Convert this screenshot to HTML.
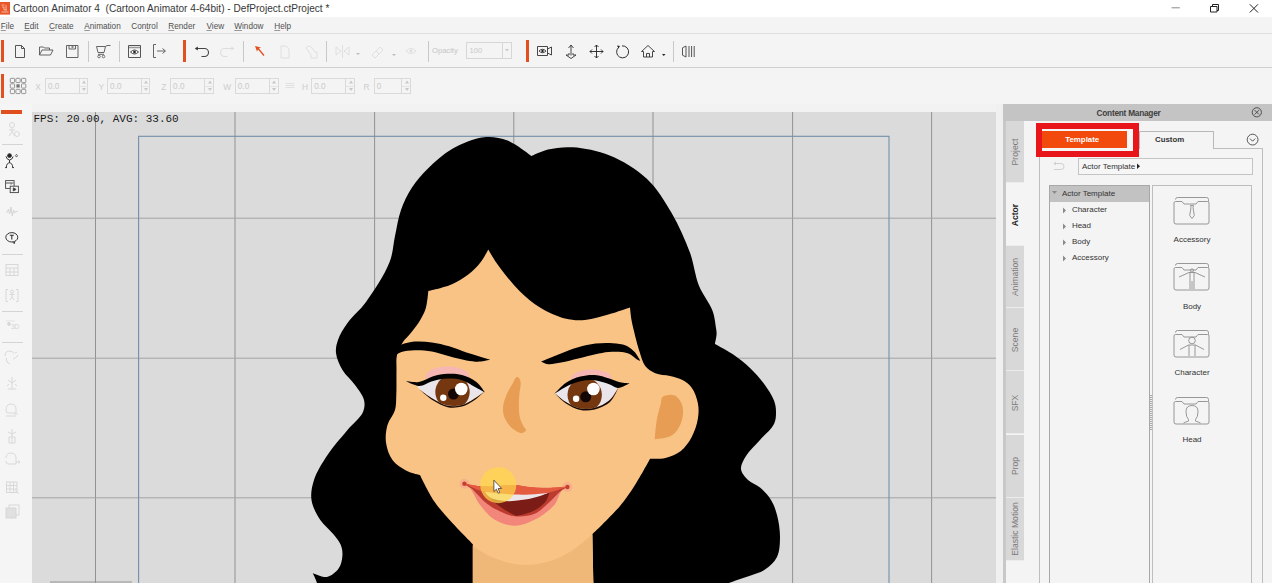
<!DOCTYPE html>
<html><head><meta charset="utf-8"><style>
html,body{margin:0;padding:0;}
body{width:1272px;height:583px;overflow:hidden;position:relative;background:#f4f4f4;font-family:'Liberation Sans', sans-serif;}
u{text-decoration-thickness:1px;text-underline-offset:1px}
</style></head><body>
<div style="position:absolute;left:0px;top:0px;width:1272px;height:17px;background:#fff"></div><svg style="position:absolute;left:0;top:2px" width="10" height="13" viewBox="0 0 10 13"><rect width="10" height="12.6" fill="#e8562a"/><path d="M1.5,3 h3 M2,5 h2 v3 h3 M6,3 v5 M1.5,10 h7" stroke="#f8c0a8" stroke-width="0.9" fill="none"/></svg><div style="position:absolute;left:13px;top:2.5px;font:normal 10.1px/12px 'Liberation Sans', sans-serif;color:#383838;white-space:pre;">Cartoon Animator 4  (Cartoon Animator 4-64bit) - DefProject.ctProject *</div><svg style="position:absolute;left:1160px;top:0" width="112" height="17" viewBox="1160 0 112 17"><path d="M1171.6,7.8 H1179.8" stroke="#8a8a8a" stroke-width="1"/><path d="M1210.5,6.5 h6.5 v5.5 h-6.5 z M1212.5,6.5 v-2 h6 v6 h-1.5" stroke="#222" stroke-width="1" fill="none"/><path d="M1249.8,4.3 L1258,12.5 M1258,4.3 L1249.8,12.5" stroke="#222" stroke-width="1"/></svg><div style="position:absolute;left:0px;top:17px;width:1272px;height:17px;background:#f4f4f4"></div><div style="position:absolute;left:0px;top:33px;width:1272px;height:1px;background:#dedede"></div><div style="position:absolute;left:0.8px;top:21.8px;font:normal 8.2px/10px 'Liberation Sans', sans-serif;color:#505050;white-space:pre;"><u style="text-decoration-color:#999">F</u>ile</div><div style="position:absolute;left:24.3px;top:21.8px;font:normal 8.2px/10px 'Liberation Sans', sans-serif;color:#505050;white-space:pre;"><u style="text-decoration-color:#999">E</u>dit</div><div style="position:absolute;left:49px;top:21.8px;font:normal 8.2px/10px 'Liberation Sans', sans-serif;color:#505050;white-space:pre;"><u style="text-decoration-color:#999">C</u>reate</div><div style="position:absolute;left:84.3px;top:21.8px;font:normal 8.2px/10px 'Liberation Sans', sans-serif;color:#505050;white-space:pre;"><u style="text-decoration-color:#999">A</u>nimation</div><div style="position:absolute;left:131.3px;top:21.8px;font:normal 8.2px/10px 'Liberation Sans', sans-serif;color:#505050;white-space:pre;">Con<u style="text-decoration-color:#999">t</u>rol</div><div style="position:absolute;left:168.3px;top:21.8px;font:normal 8.2px/10px 'Liberation Sans', sans-serif;color:#505050;white-space:pre;"><u style="text-decoration-color:#999">R</u>ender</div><div style="position:absolute;left:206.5px;top:21.8px;font:normal 8.2px/10px 'Liberation Sans', sans-serif;color:#505050;white-space:pre;"><u style="text-decoration-color:#999">V</u>iew</div><div style="position:absolute;left:234.3px;top:21.8px;font:normal 8.2px/10px 'Liberation Sans', sans-serif;color:#505050;white-space:pre;"><u style="text-decoration-color:#999">W</u>indow</div><div style="position:absolute;left:274.3px;top:21.8px;font:normal 8.2px/10px 'Liberation Sans', sans-serif;color:#505050;white-space:pre;"><u style="text-decoration-color:#999">H</u>elp</div><div style="position:absolute;left:0px;top:34px;width:1272px;height:33px;background:#f4f4f4"></div><div style="position:absolute;left:0px;top:67px;width:1272px;height:1px;background:#d0d0d0"></div><div style="position:absolute;left:1px;top:40px;width:3px;height:22px;background:#e2501f"></div><div style="position:absolute;left:183px;top:40px;width:3.3px;height:22px;background:#e2501f"></div><div style="position:absolute;left:525.8px;top:40px;width:3px;height:22px;background:#e2501f"></div><div style="position:absolute;left:87.5px;top:40.5px;width:1px;height:21px;background:#c8c8c8"></div><div style="position:absolute;left:118.5px;top:40.5px;width:1px;height:21px;background:#c8c8c8"></div><div style="position:absolute;left:243.4px;top:40.5px;width:1px;height:21px;background:#c8c8c8"></div><div style="position:absolute;left:326.4px;top:40.5px;width:1px;height:21px;background:#c8c8c8"></div><div style="position:absolute;left:427.5px;top:40.5px;width:1px;height:21px;background:#c8c8c8"></div><div style="position:absolute;left:672.5px;top:40.5px;width:1px;height:21px;background:#c8c8c8"></div><svg style="position:absolute;left:0;top:34px" width="720" height="33" viewBox="0 34 720 33" fill="none" stroke-linejoin="round"><path d="M15.5,45.5 h6 l3,3 v9 h-9 z M21.5,45.5 v3 h3" stroke="#444" stroke-width="0.9"/><path d="M39.5,55 v-8 h4 l1,1 h5 v2 M39.5,55 l2.5,-5 h11 l-2.5,5 z" stroke="#555" stroke-width="0.9"/><path d="M66.5,45.5 h11.5 v12 h-11.5 z M69,45.5 v3.5 h6.5 v-3.5" stroke="#555" stroke-width="0.9"/><rect x="71.5" y="46" width="2" height="2" fill="#888"/><path d="M96.5,46.5 h9 l-1.5,6 h-6 z M105.5,46.5 l1.5,-1 h3.5 M98,54.3 h6" stroke="#555" stroke-width="0.9"/><circle cx="99" cy="56.5" r="1.3" stroke="#555" stroke-width="0.8"/><circle cx="103.5" cy="56.5" r="1.3" stroke="#555" stroke-width="0.8"/><path d="M128.5,45.5 h12 v12 h-12 z" stroke="#555" stroke-width="1"/><path d="M129,47.5 h11" stroke="#999" stroke-width="1.5"/><path d="M130.5,52 q4,-4 8,0 q-4,4 -8,0z" stroke="#333" stroke-width="0.9"/><circle cx="134.5" cy="52" r="1.3" fill="#222"/><path d="M156,44.5 h-2.5 v13 h2.5 M157,51 h8 M162.5,48.5 l3,2.5 l-3,2.5" stroke="#555" stroke-width="0.9"/><path d="M196.5,48.5 h8 a4,4 0 0 1 0,8 h-3" stroke="#444" stroke-width="1.1"/><path d="M194.8,48.5 l3,-2 v4 z" fill="#333"/><path d="M232.5,48.5 h-8 a4,4 0 0 0 0,8 h3" stroke="#ddd" stroke-width="1.1"/><path d="M234.3,48.5 l-3,-2 v4 z" fill="#ddd"/><path d="M255,46 l6,1.5 l-2,1 l5.5,6.5 l-1,1 l-5.5,-6.5 l-1,2 z" fill="#e2501f"/><path d="M281,46 h5 l3,3 v9 h-8 z" stroke="#ddd" stroke-width="0.9"/><path d="M306,48 q3,-4 6,0 l3,4 h2 v6 h-6 v-3 z" stroke="#ddd" stroke-width="0.9"/><path d="M336,47 l5,4 l-5,4 z M349,47 l-5,4 l5,4 z M342.5,45 v13" stroke="#ddd" stroke-width="0.9"/><path d="M356,53 h4 l-2,2 z" fill="#bbb"/><path d="M372,55 l8,-8 l3,3 l-8,8 z M376,51 l3,3" stroke="#ddd" stroke-width="0.9"/><path d="M392,54 h4 l-2,2 z" fill="#bbb"/><path d="M406,51 q5,-5 10,0 q-5,5 -10,0z" stroke="#ddd" stroke-width="0.9"/><circle cx="411" cy="51" r="1.5" fill="#ddd"/></svg><div style="position:absolute;left:432px;top:46px;font:normal 7.6px/10px 'Liberation Sans', sans-serif;color:#c4c4c4;white-space:pre;">Opacity</div><div style="position:absolute;left:466px;top:42px;width:45.5px;height:17px;border:1px solid #d6d6d6;box-sizing:border-box;background:#f4f4f4"></div><div style="position:absolute;left:502px;top:42px;width:1px;height:17px;background:#d6d6d6"></div><div style="position:absolute;left:469.5px;top:46px;font:normal 7.6px/10px 'Liberation Sans', sans-serif;color:#c8c8c8;white-space:pre;">100</div><svg style="position:absolute;left:504px;top:48px" width="6" height="5"><path d="M1,1 h4 l-2,2.5z" fill="#c8c8c8"/></svg><svg style="position:absolute;left:530px;top:34px" width="180" height="33" viewBox="530 34 180 33" fill="none"><path d="M537.5,46.5 h10 v9 h-10 z M547.5,49 l4,-2 v8 l-4,-2" stroke="#333" stroke-width="0.9"/><path d="M539,51 q3.5,-3.5 7,0 q-3.5,3.5 -7,0z" stroke="#222" stroke-width="0.8"/><circle cx="542.5" cy="51" r="1.2" fill="#222"/><path d="M571,45.5 v10 M568.5,48 l2.5,-3 l2.5,3 M566,55 l5,3.5 l5,-3.5 h-3 v-2 M566,55 h3 v-2" stroke="#333" stroke-width="0.9"/><path d="M596.5,45 v13 M590,51.5 h13 M594.5,47 l2,-2 l2,2 M594.5,56 l2,2 l2,-2 M592,49.5 l-2,2 l2,2 M601,49.5 l2,2 l-2,2" stroke="#222" stroke-width="0.9"/><path d="M618.5,47.5 a6,6 0 1 0 3.5,-1.6" stroke="#333" stroke-width="1"/><path d="M617,45.5 l3,0.5 l-1.5,2.5z" fill="#222"/><path d="M641.5,51.5 l6.5,-6 l6.5,6 h-2 v5.5 h-9 v-5.5 z M646.5,57 v-3.5 h3 v3.5" stroke="#333" stroke-width="0.9"/><path d="M662,54 h3.5 l-1.75,2z" fill="#222"/><path d="M686,46 v11 l-3.5,-1.8 v-7.4 z M689,46 v11 M691.6,46 v11 M694.2,46 v11" stroke="#444" stroke-width="0.9"/></svg><div style="position:absolute;left:0px;top:68px;width:1272px;height:35px;background:#f4f4f4"></div><div style="position:absolute;left:0px;top:103.6px;width:1272px;height:1.2px;background:#e0e0e0"></div><div style="position:absolute;left:1px;top:73.7px;width:3px;height:24.2px;background:#e2501f"></div><svg style="position:absolute;left:9px;top:77px" width="20" height="19" viewBox="9 77 20 19"><rect x="10.3" y="78.3" width="4.3" height="4.3" rx="0.8" fill="none" stroke="#8a8a8a" stroke-width="0.9"/><rect x="15.9" y="78.3" width="4.3" height="4.3" rx="0.8" fill="none" stroke="#8a8a8a" stroke-width="0.9"/><rect x="21.5" y="78.3" width="4.3" height="4.3" rx="0.8" fill="none" stroke="#8a8a8a" stroke-width="0.9"/><rect x="10.3" y="83.8" width="4.3" height="4.3" rx="0.8" fill="none" stroke="#8a8a8a" stroke-width="0.9"/><rect x="16.4" y="84.3" width="3.3" height="3.3" fill="#777"/><rect x="21.5" y="83.8" width="4.3" height="4.3" rx="0.8" fill="none" stroke="#8a8a8a" stroke-width="0.9"/><rect x="10.3" y="89.3" width="4.3" height="4.3" rx="0.8" fill="none" stroke="#8a8a8a" stroke-width="0.9"/><rect x="15.9" y="89.3" width="4.3" height="4.3" rx="0.8" fill="none" stroke="#8a8a8a" stroke-width="0.9"/><rect x="21.5" y="89.3" width="4.3" height="4.3" rx="0.8" fill="none" stroke="#8a8a8a" stroke-width="0.9"/></svg><div style="position:absolute;left:35.2px;top:81.5px;font:normal 8.4px/10px 'Liberation Sans', sans-serif;color:#cdcdcd;white-space:pre;">X</div><div style="position:absolute;left:45.1px;top:77.7px;width:43px;height:16px;border:1px solid #dadada;box-sizing:border-box"></div><div style="position:absolute;left:78.5px;top:77.7px;width:1px;height:16px;background:#dadada"></div><div style="position:absolute;left:79.5px;top:85.6px;width:8px;height:0.8px;background:#e4e4e4"></div><div style="position:absolute;left:47.9px;top:81.5px;font:normal 8.2px/10px 'Liberation Sans', sans-serif;color:#cacaca;white-space:pre;">0.0</div><svg style="position:absolute;left:79.89999999999999px;top:79px" width="8" height="14"><path d="M2,4.5 l2,-3 l2,3z M2,9 l2,3 l2,-3z" fill="#c8c8c8"/></svg><div style="position:absolute;left:98.5px;top:81.5px;font:normal 8.4px/10px 'Liberation Sans', sans-serif;color:#cdcdcd;white-space:pre;">Y</div><div style="position:absolute;left:107.3px;top:77.7px;width:43px;height:16px;border:1px solid #dadada;box-sizing:border-box"></div><div style="position:absolute;left:140.70000000000002px;top:77.7px;width:1px;height:16px;background:#dadada"></div><div style="position:absolute;left:141.70000000000002px;top:85.6px;width:8px;height:0.8px;background:#e4e4e4"></div><div style="position:absolute;left:110.1px;top:81.5px;font:normal 8.2px/10px 'Liberation Sans', sans-serif;color:#cacaca;white-space:pre;">0.0</div><svg style="position:absolute;left:142.10000000000002px;top:79px" width="8" height="14"><path d="M2,4.5 l2,-3 l2,3z M2,9 l2,3 l2,-3z" fill="#c8c8c8"/></svg><div style="position:absolute;left:161.2px;top:81.5px;font:normal 8.4px/10px 'Liberation Sans', sans-serif;color:#cdcdcd;white-space:pre;">Z</div><div style="position:absolute;left:170.3px;top:77.7px;width:43.5px;height:16px;border:1px solid #dadada;box-sizing:border-box"></div><div style="position:absolute;left:204.20000000000002px;top:77.7px;width:1px;height:16px;background:#dadada"></div><div style="position:absolute;left:205.20000000000002px;top:85.6px;width:8px;height:0.8px;background:#e4e4e4"></div><div style="position:absolute;left:173.10000000000002px;top:81.5px;font:normal 8.2px/10px 'Liberation Sans', sans-serif;color:#cacaca;white-space:pre;">0.0</div><svg style="position:absolute;left:205.60000000000002px;top:79px" width="8" height="14"><path d="M2,4.5 l2,-3 l2,3z M2,9 l2,3 l2,-3z" fill="#c8c8c8"/></svg><div style="position:absolute;left:223.3px;top:81.5px;font:normal 8.4px/10px 'Liberation Sans', sans-serif;color:#cdcdcd;white-space:pre;">W</div><div style="position:absolute;left:235px;top:77.7px;width:43.5px;height:16px;border:1px solid #dadada;box-sizing:border-box"></div><div style="position:absolute;left:268.9px;top:77.7px;width:1px;height:16px;background:#dadada"></div><div style="position:absolute;left:269.9px;top:85.6px;width:8px;height:0.8px;background:#e4e4e4"></div><div style="position:absolute;left:237.8px;top:81.5px;font:normal 8.2px/10px 'Liberation Sans', sans-serif;color:#cacaca;white-space:pre;">0.0</div><svg style="position:absolute;left:270.3px;top:79px" width="8" height="14"><path d="M2,4.5 l2,-3 l2,3z M2,9 l2,3 l2,-3z" fill="#c8c8c8"/></svg><div style="position:absolute;left:302px;top:81.5px;font:normal 8.4px/10px 'Liberation Sans', sans-serif;color:#cdcdcd;white-space:pre;">H</div><div style="position:absolute;left:311.4px;top:77.7px;width:43.5px;height:16px;border:1px solid #dadada;box-sizing:border-box"></div><div style="position:absolute;left:345.29999999999995px;top:77.7px;width:1px;height:16px;background:#dadada"></div><div style="position:absolute;left:346.29999999999995px;top:85.6px;width:8px;height:0.8px;background:#e4e4e4"></div><div style="position:absolute;left:314.2px;top:81.5px;font:normal 8.2px/10px 'Liberation Sans', sans-serif;color:#cacaca;white-space:pre;">0.0</div><svg style="position:absolute;left:346.7px;top:79px" width="8" height="14"><path d="M2,4.5 l2,-3 l2,3z M2,9 l2,3 l2,-3z" fill="#c8c8c8"/></svg><div style="position:absolute;left:363.5px;top:81.5px;font:normal 8.4px/10px 'Liberation Sans', sans-serif;color:#cdcdcd;white-space:pre;">R</div><div style="position:absolute;left:374px;top:77.7px;width:37px;height:16px;border:1px solid #dadada;box-sizing:border-box"></div><div style="position:absolute;left:401.4px;top:77.7px;width:1px;height:16px;background:#dadada"></div><div style="position:absolute;left:402.4px;top:85.6px;width:8px;height:0.8px;background:#e4e4e4"></div><div style="position:absolute;left:376.8px;top:81.5px;font:normal 8.2px/10px 'Liberation Sans', sans-serif;color:#cacaca;white-space:pre;">0</div><svg style="position:absolute;left:402.8px;top:79px" width="8" height="14"><path d="M2,4.5 l2,-3 l2,3z M2,9 l2,3 l2,-3z" fill="#c8c8c8"/></svg><svg style="position:absolute;left:284px;top:81px" width="12" height="9"><path d="M1.5,2.5 h9 M1.5,4.5 h9 M1.5,6.5 h9" stroke="#dcdcdc" stroke-width="0.8"/></svg><div style="position:absolute;left:0px;top:104px;width:32px;height:479px;background:#f5f5f5"></div><div style="position:absolute;left:1px;top:110.2px;width:21px;height:3.6px;background:#e04e1e"></div><div style="position:absolute;left:2px;top:144px;width:20.5px;height:1px;background:#d4d4d4"></div><div style="position:absolute;left:2px;top:253.6px;width:20.5px;height:1px;background:#d4d4d4"></div><div style="position:absolute;left:2px;top:311px;width:20.5px;height:1px;background:#d4d4d4"></div><div style="position:absolute;left:2px;top:342px;width:20.5px;height:1px;background:#d4d4d4"></div><svg style="position:absolute;left:0;top:104px" width="32" height="479" viewBox="0 104 32 479" fill="none" stroke-width="0.9"><g stroke="#d6d6d6"><circle cx="12" cy="125" r="2.5"/><path d="M12,128 v4 l-3,4 M12,132 l3,4 M9,130 h6"/><circle cx="17" cy="134" r="2.5"/></g><g stroke="#333" stroke-width="1"><circle cx="9.5" cy="155.6" r="1.9" fill="#222"/><path d="M6,156.3 q0.8,3.4 3.5,3.8 q2.7,-0.4 3.6,-3.6 M9.5,160 v2.8 M9.5,162.8 q-3,0.2 -3.2,4.7 M9.5,162.8 q3,0.2 3.2,4.7 M5.2,167.6 h1.8 M12.2,167.6 h1.8"/><path d="M16.5,154.3 l1,1.4 l-1,1.4 l-1,-1.4z" stroke-width="0.7"/></g><g stroke="#444" stroke-width="0.9"><rect x="5.6" y="180.6" width="8.5" height="7.8"/><path d="M6,183 h7.5 M11,183.5 v1" /><rect x="10.2" y="186.2" width="8.2" height="6.4" fill="#f5f5f5"/><path d="M13.3,187.8 l2.8,1.6 l-2.8,1.6z" fill="#333"/></g><path d="M6,212 h1.5 l1,-3 l1.2,5 l1.3,-7 l1.3,9 l1.3,-6 l1,3 l1,-1.5 h2" stroke="#d4d4d4" stroke-width="1"/><g stroke="#333" stroke-width="1"><ellipse cx="11.8" cy="237.3" rx="6" ry="4.7"/><path d="M12.8,242 l1.4,1.6 l0.6,-1.9" fill="#f5f5f5"/><path d="M9.8,235.3 h4 M11.8,235.3 v4.2" stroke-width="1.1"/></g><g stroke="#d6d6d6" stroke-width="0.9"><rect x="6" y="264.5" width="12" height="11"/><path d="M6,268 h12 M6,272 h12 M10,268 v7.5 M14,268 v7.5"/><path d="M8,289.5 h-2 v12 h2 M16,289.5 h2 v12 h-2"/><circle cx="12" cy="291.5" r="1.5"/><path d="M12,293 v4 l-2,3 M12,297 l2,3 M9.5,294.5 h5"/><circle cx="9" cy="324" r="1.4" fill="#d6d6d6"/><path d="M6,321 h9" stroke-width="0.6"/><path d="M5,356 q0,-5 5,-5 q3,0 4,3 M6,358 q0,5 4,6 M13,359 q4,-1 5,-4 M15,353 l2,-1"/><path d="M12,377 v12 M8,380 l4,3 l4,-3 M8,389 h8 M7,386 l2,-2 M17,386 l-2,-2"/><path d="M6,410 q0,-6 5,-6 q5,0 5,5 v4 h-8 q-2,0 -2,-3 M14,414 h4 M6,416 h10"/><path d="M12,429 v14 M8,432 l4,2 l4,-2 M9,437 h6 v6 h-6 z"/><path d="M6,458 q0,-5 5,-5 q5,0 5,5 v6 h-8 q-2,0 -2,-3 M16,462 h4 l-1.5,-1.5 M20,462 l-1.5,1.5"/><rect x="6.5" y="482" width="10.5" height="10.5"/><path d="M6.5,485.5 h10.5 M6.5,489 h10.5 M10,482 v10.5 M13.5,482 v10.5 M15,490 l4,4"/><rect x="9" y="505" width="10" height="10"/><rect x="6" y="508" width="10" height="10" fill="#e0e0e0"/></g></svg><div style="position:absolute;left:11px;top:322.5px;font:normal 6.5px/8px 'Liberation Sans', sans-serif;color:#d4d4d4;white-space:pre;">3D</div><div style="position:absolute;left:32px;top:104px;width:964px;height:8px;background:#f2f2f2"></div><div style="position:absolute;left:996px;top:104px;width:7px;height:479px;background:#f0f0f0"></div><svg style="position:absolute;left:0;top:0" width="1272" height="583" viewBox="0 0 1272 583"><defs><clipPath id="cvc"><rect x="32" y="112" width="964" height="472"/></clipPath></defs><g clip-path="url(#cvc)"><rect x="32" y="112" width="964" height="472" fill="#dbdbdb"/><rect x="50" y="581" width="82" height="2" fill="#b8b8b8"/><rect x="95.0" y="112" width="1" height="472" fill="#929292"/><rect x="234.5" y="112" width="1" height="472" fill="#929292"/><rect x="374.1" y="112" width="1" height="472" fill="#929292"/><rect x="513.3" y="112" width="1" height="472" fill="#929292"/><rect x="652.5" y="112" width="1" height="472" fill="#929292"/><rect x="792.1" y="112" width="1" height="472" fill="#929292"/><rect x="931.1" y="112" width="1" height="472" fill="#929292"/><rect x="32" y="217.7" width="964" height="1" fill="#a4a4a4"/><rect x="32" y="357.7" width="964" height="1" fill="#a4a4a4"/><rect x="32" y="497.3" width="964" height="1" fill="#a4a4a4"/><rect x="138.6" y="136.3" width="750.4" height="460" fill="none" stroke="#7090aa" stroke-width="1.1"/><path d="M484.00,137.20 C492.32,136.31 499.93,137.68 507.50,140.50 C515.81,143.60 531.50,156.00 531.50,156.00 C531.50,156.00 541.83,150.96 548.00,149.50 C555.30,147.78 563.69,146.72 572.70,147.30 C583.84,148.02 597.76,150.62 609.70,155.50 C622.53,160.75 636.44,169.03 646.80,178.70 C656.96,188.17 664.36,200.52 671.50,212.70 C678.82,225.18 685.31,239.94 690.00,252.80 C694.10,264.05 694.92,275.40 698.90,285.40 C702.59,294.67 709.78,303.14 712.60,311.00 C714.78,317.07 715.37,323.76 716.00,328.00 C716.37,330.50 716.68,331.75 716.60,334.00 C716.50,336.92 714.90,344.00 714.90,344.00 C714.90,344.00 727.12,350.37 732.90,354.30 C738.84,358.34 744.79,363.06 750.00,368.00 C755.07,372.81 759.77,378.00 763.80,383.50 C767.75,388.88 772.03,395.31 774.00,400.60 C775.50,404.64 775.98,408.15 776.00,412.00 C776.02,415.95 775.90,419.99 774.00,424.00 C771.49,429.31 764.67,434.67 760.00,440.00 C755.33,445.33 749.23,450.66 746.00,456.00 C743.39,460.33 740.59,464.94 741.00,469.00 C741.39,472.93 744.93,476.95 748.00,480.00 C751.20,483.17 756.30,484.36 760.00,487.50 C764.02,490.91 768.16,495.38 771.00,500.00 C773.80,504.56 775.53,509.42 777.00,515.00 C778.73,521.54 780.05,529.84 780.00,537.00 C779.95,543.83 779.72,551.46 777.00,557.00 C774.48,562.13 769.59,566.36 765.00,569.50 C760.55,572.54 755.03,573.86 750.00,575.75 C745.03,577.61 739.79,578.98 735.00,580.75 C730.48,582.41 726.77,583.54 722.00,586.00 C715.49,589.35 700.00,600.00 700.00,600.00 C700.00,600.00 320.00,600.00 320.00,600.00 C320.00,600.00 318.45,587.85 317.00,583.00 C315.85,579.15 312.70,573.00 312.70,573.00 C312.70,573.00 322.47,577.75 326.80,577.00 C331.10,576.26 336.00,572.25 338.60,568.60 C341.10,565.09 342.11,559.83 342.40,555.70 C342.66,552.00 342.16,548.44 340.80,545.00 C339.29,541.18 336.22,537.78 333.20,534.00 C329.59,529.49 323.85,525.42 320.30,520.00 C316.50,514.20 312.49,506.81 311.50,500.00 C310.54,493.46 311.81,486.83 314.00,480.00 C316.59,471.89 322.14,463.10 327.50,455.00 C333.19,446.40 341.19,437.60 347.50,430.00 C352.93,423.45 360.58,417.78 363.00,412.00 C364.72,407.89 364.95,404.07 364.00,400.00 C362.86,395.10 358.46,389.87 355.00,385.00 C351.35,379.85 345.69,375.44 342.50,370.00 C339.42,364.75 336.57,358.36 336.00,353.00 C335.51,348.44 336.46,344.48 338.00,340.00 C339.87,334.55 343.43,328.75 347.50,323.00 C352.37,316.11 359.86,310.46 366.00,302.00 C373.91,291.11 384.86,274.36 389.60,262.10 C393.20,252.80 393.10,244.68 395.00,236.00 C396.90,227.31 398.09,218.19 401.00,210.00 C403.81,202.08 407.50,194.52 412.00,187.60 C416.50,180.69 421.79,174.61 428.00,168.50 C434.92,161.69 442.95,154.16 452.00,149.00 C461.51,143.58 474.03,138.27 484.00,137.20Z" fill="#000"/>
<path d="M488.30,249.40 C488.30,249.40 493.12,258.01 496.00,262.30 C499.08,266.88 502.52,271.38 506.30,276.00 C510.45,281.07 514.77,286.42 520.00,291.40 C525.84,296.96 532.64,303.03 540.00,307.50 C547.59,312.12 556.96,316.49 565.00,318.50 C571.89,320.22 578.01,320.56 585.00,320.00 C592.92,319.36 602.17,316.21 610.00,314.00 C617.08,312.00 630.00,307.50 630.00,307.50 C630.00,307.50 630.84,316.08 631.50,320.00 C632.10,323.53 632.73,326.05 633.70,330.00 C635.13,335.84 637.38,345.18 639.50,351.60 C641.27,356.94 642.32,362.32 645.20,366.00 C647.78,369.30 651.41,371.54 655.30,373.20 C659.57,375.02 665.33,374.81 670.00,376.00 C674.37,377.11 678.82,377.98 682.50,380.00 C686.01,381.94 689.24,384.30 691.70,387.70 C694.61,391.71 696.89,397.94 697.90,403.20 C698.87,408.25 698.76,413.30 697.90,418.60 C696.93,424.56 694.65,431.59 691.70,437.10 C688.90,442.33 685.33,447.50 680.90,451.00 C676.56,454.43 670.76,456.74 665.50,458.00 C660.48,459.21 650.10,458.70 650.10,458.70 C650.10,458.70 640.23,476.85 635.00,485.00 C630.17,492.52 626.09,498.73 620.00,506.00 C612.47,514.99 592.40,534.20 592.40,534.20 C592.40,534.20 593.80,600.00 593.80,600.00 C593.80,600.00 472.80,600.00 472.80,600.00 C472.80,600.00 472.80,544.10 472.80,544.10 C472.80,544.10 457.69,528.97 451.00,521.50 C444.84,514.62 439.07,508.51 434.00,501.00 C428.67,493.09 420.00,475.00 420.00,475.00 C420.00,475.00 411.67,473.35 407.50,471.25 C402.50,468.73 396.08,464.80 392.50,460.00 C388.92,455.21 386.81,448.42 386.00,442.50 C385.22,436.75 385.96,430.47 387.50,425.00 C389.01,419.65 393.55,415.14 395.00,410.00 C396.37,405.13 396.03,400.64 396.30,395.00 C396.64,387.73 396.35,377.27 396.50,370.00 C396.62,364.36 395.88,359.71 397.00,355.00 C398.09,350.39 400.62,345.67 403.00,342.00 C405.05,338.84 407.58,336.97 410.00,334.00 C412.85,330.51 416.30,326.49 418.90,322.30 C421.55,318.03 424.14,313.58 425.70,308.60 C427.38,303.24 428.30,291.10 428.30,291.10 C428.30,291.10 444.45,287.60 451.40,284.60 C457.76,281.86 463.59,278.21 468.60,274.30 C473.21,270.70 477.26,266.59 480.60,262.30 C483.75,258.26 488.30,249.40 488.30,249.40Z" fill="#f9c386"/>
<path d="M472.80,546.00 C472.80,546.00 485.24,554.46 492.70,557.50 C501.14,560.94 511.64,564.20 521.20,564.80 C530.64,565.39 541.07,563.69 549.70,561.20 C557.51,558.95 564.14,555.55 571.00,551.30 C578.41,546.71 592.40,534.20 592.40,534.20 C592.40,534.20 593.80,600.00 593.80,600.00 C593.80,600.00 472.80,600.00 472.80,600.00 C472.80,600.00 472.80,546.00 472.80,546.00Z" fill="#efb878"/>
<path d="M662.40,397.00 C664.53,395.09 671.48,393.95 674.80,395.40 C678.22,396.89 681.36,401.95 682.50,406.20 C683.80,411.03 682.81,418.21 680.90,423.20 C679.08,427.95 675.87,432.89 671.70,435.60 C667.27,438.48 654.70,439.40 654.70,439.40 C654.70,439.40 655.85,424.98 657.00,418.60 C658.01,413.04 659.91,407.19 660.90,403.20 C661.53,400.67 660.88,398.36 662.40,397.00Z" fill="#e79d53"/>
<path d="M518.20,377.20 C519.23,377.67 520.23,379.97 520.60,382.00 C521.16,385.04 519.70,390.00 519.40,394.00 C519.10,398.00 518.70,402.00 518.80,406.00 C518.90,410.00 519.08,414.42 520.00,418.00 C520.80,421.12 522.42,424.23 523.60,426.40 C524.41,427.90 526.16,428.92 526.00,430.00 C525.84,431.13 523.85,432.70 522.40,433.00 C520.73,433.34 518.38,432.27 516.40,431.20 C513.97,429.90 511.25,427.66 509.20,425.20 C506.98,422.54 504.78,418.92 503.80,415.60 C502.88,412.50 502.82,409.34 503.20,406.00 C503.64,402.19 505.19,397.81 506.80,394.00 C508.40,390.21 511.14,386.18 512.80,383.20 C513.97,381.09 514.64,378.69 515.80,377.80 C516.54,377.24 517.50,376.88 518.20,377.20Z" fill="#e79d53"/>
<path d="M396.50,347.00 C396.50,347.00 399.46,345.34 401.60,344.60 C404.89,343.46 409.93,342.02 414.60,341.60 C419.92,341.12 426.17,341.63 431.90,342.40 C437.70,343.18 443.49,344.62 449.20,346.30 C455.02,348.01 461.12,350.80 466.50,352.60 C471.12,354.15 475.40,355.34 479.50,356.60 C483.19,357.73 490.00,359.80 490.00,359.80 C490.00,359.80 483.20,361.46 479.50,361.60 C475.41,361.76 471.11,361.16 466.50,360.40 C461.12,359.52 454.95,357.76 449.20,356.30 C443.42,354.83 437.71,352.60 431.90,351.60 C426.18,350.62 419.95,350.15 414.60,350.30 C409.95,350.43 404.88,351.01 401.60,352.00 C399.44,352.65 396.50,354.50 396.50,354.50 C396.50,354.50 396.50,347.00 396.50,347.00Z" fill="#000"/>
<path d="M541.00,361.50 C541.00,361.50 554.56,355.85 561.00,353.40 C566.92,351.15 572.40,348.94 578.20,347.30 C583.91,345.69 589.70,344.28 595.50,343.60 C601.24,342.93 607.46,342.81 612.80,343.20 C617.46,343.54 622.07,343.81 625.80,345.40 C629.16,346.84 631.98,349.24 634.40,351.80 C636.82,354.37 640.30,360.80 640.30,360.80 C640.30,360.80 638.26,360.20 637.00,359.50 C634.96,358.37 632.26,355.25 629.60,354.00 C627.07,352.81 624.54,352.37 621.50,352.00 C617.70,351.54 612.82,351.64 608.50,352.00 C604.15,352.37 600.12,353.24 595.50,354.20 C590.12,355.32 583.96,357.10 578.20,358.50 C572.46,359.90 566.36,361.63 561.00,362.60 C556.39,363.43 551.62,364.65 548.00,364.20 C545.26,363.86 541.00,361.50 541.00,361.50Z" fill="#000"/>
<ellipse cx="447.5" cy="376.5" rx="22" ry="10" fill="#f6b6b4"/>
<ellipse cx="591.5" cy="379" rx="20.5" ry="9.5" fill="#f6b6b4"/>
<defs><clipPath id="cle"><path d="M417.00,387.00 C417.00,387.00 427.81,380.25 433.20,378.50 C438.01,376.94 442.79,376.52 447.60,376.40 C452.39,376.29 457.32,376.45 462.00,377.80 C466.94,379.22 472.58,382.29 476.40,385.00 C479.41,387.14 483.60,392.00 483.60,392.00 C483.60,392.00 477.06,396.97 473.50,399.10 C469.87,401.28 466.18,403.80 462.00,404.90 C457.58,406.06 452.30,406.49 447.60,405.60 C442.69,404.67 437.99,401.92 433.20,399.10 C427.78,395.91 417.00,387.00 417.00,387.00Z"/></clipPath><clipPath id="cre"><path d="M555.20,393.40 C555.20,393.40 561.94,387.06 566.00,384.70 C570.29,382.20 575.52,380.20 580.40,379.00 C585.12,377.84 590.05,377.04 594.80,377.50 C599.65,377.97 605.10,380.01 609.20,381.90 C612.62,383.47 618.00,387.50 618.00,387.50 C618.00,387.50 613.04,397.22 609.20,400.60 C605.32,404.01 599.74,406.51 594.80,407.80 C590.13,409.02 585.10,409.39 580.40,408.50 C575.49,407.57 570.31,404.63 566.00,402.00 C561.97,399.54 555.20,393.40 555.20,393.40Z"/></clipPath></defs>
<path d="M417.00,387.00 C417.00,387.00 427.81,380.25 433.20,378.50 C438.01,376.94 442.79,376.52 447.60,376.40 C452.39,376.29 457.32,376.45 462.00,377.80 C466.94,379.22 472.58,382.29 476.40,385.00 C479.41,387.14 483.60,392.00 483.60,392.00 C483.60,392.00 477.06,396.97 473.50,399.10 C469.87,401.28 466.18,403.80 462.00,404.90 C457.58,406.06 452.30,406.49 447.60,405.60 C442.69,404.67 437.99,401.92 433.20,399.10 C427.78,395.91 417.00,387.00 417.00,387.00Z" fill="#e9e5ea"/>
<g clip-path="url(#cle)"><circle cx="452.5" cy="392" r="17.2" fill="#74370f"/><circle cx="453.5" cy="394" r="5.5" fill="#140806"/><circle cx="461.3" cy="389" r="6.3" fill="#fff"/><circle cx="443.3" cy="397.7" r="3.2" fill="#fff"/></g>
<path d="M555.20,393.40 C555.20,393.40 561.94,387.06 566.00,384.70 C570.29,382.20 575.52,380.20 580.40,379.00 C585.12,377.84 590.05,377.04 594.80,377.50 C599.65,377.97 605.10,380.01 609.20,381.90 C612.62,383.47 618.00,387.50 618.00,387.50 C618.00,387.50 613.04,397.22 609.20,400.60 C605.32,404.01 599.74,406.51 594.80,407.80 C590.13,409.02 585.10,409.39 580.40,408.50 C575.49,407.57 570.31,404.63 566.00,402.00 C561.97,399.54 555.20,393.40 555.20,393.40Z" fill="#e9e5ea"/>
<g clip-path="url(#cre)"><circle cx="584.7" cy="394.8" r="17.2" fill="#74370f"/><circle cx="585.7" cy="396.8" r="5.5" fill="#140806"/><circle cx="593.4" cy="389" r="6.3" fill="#fff"/><circle cx="576.1" cy="398.8" r="3.2" fill="#fff"/></g>
<path d="M405.80,381.10 C405.80,381.10 414.44,382.69 418.80,382.00 C423.56,381.25 428.32,377.57 433.20,376.20 C437.93,374.87 442.79,374.00 447.60,373.80 C452.39,373.60 457.32,373.71 462.00,375.00 C466.93,376.35 472.48,378.90 476.40,382.00 C480.01,384.85 485.00,392.50 485.00,392.50 C485.00,392.50 478.56,388.91 475.00,387.00 C470.96,384.83 466.58,381.60 462.00,380.20 C457.45,378.81 452.39,378.47 447.60,378.60 C442.79,378.73 437.93,379.78 433.20,381.00 C428.40,382.24 423.64,386.04 419.00,386.00 C414.51,385.96 405.80,381.10 405.80,381.10Z" fill="#000"/>
<path d="M554.30,394.00 C554.30,394.00 561.61,385.71 566.00,382.80 C570.32,379.94 575.50,377.90 580.40,376.60 C585.11,375.35 590.03,374.69 594.80,375.00 C599.63,375.31 604.77,377.19 609.20,378.50 C613.09,379.65 616.46,381.50 620.00,382.30 C623.25,383.03 629.60,383.30 629.60,383.30 C629.60,383.30 621.60,388.02 618.00,388.00 C614.86,387.98 612.53,385.46 609.20,384.30 C605.03,382.85 599.64,380.79 594.80,380.30 C590.04,379.82 585.12,380.26 580.40,381.30 C575.52,382.38 570.46,384.60 566.00,386.80 C561.79,388.88 554.30,394.00 554.30,394.00Z" fill="#000"/>
<path d="M419.00,389.00 C419.00,389.00 428.32,396.26 433.20,399.10 C437.86,401.81 442.68,404.85 447.60,405.80 C452.29,406.70 457.58,406.17 462.00,405.00 C466.17,403.90 469.83,401.47 473.50,399.30 C477.16,397.13 484.00,392.00 484.00,392.00 C484.00,392.00 477.64,398.08 474.00,400.50 C470.31,402.95 466.31,405.47 462.00,406.60 C457.54,407.77 452.29,408.12 447.60,407.20 C442.68,406.23 437.81,403.47 433.20,400.60 C428.24,397.51 419.00,389.00 419.00,389.00Z" fill="#1a0a05"/>
<path d="M555.00,393.50 C555.00,393.50 561.93,399.55 566.00,402.00 C570.34,404.61 575.49,407.57 580.40,408.50 C585.10,409.39 590.13,409.02 594.80,407.80 C599.74,406.51 605.25,403.99 609.20,400.60 C613.15,397.22 618.50,387.50 618.50,387.50 C618.50,387.50 613.94,398.35 610.00,402.00 C606.05,405.66 599.94,408.10 594.80,409.40 C590.06,410.60 585.09,410.91 580.40,410.00 C575.48,409.05 570.28,406.31 566.00,403.50 C561.85,400.77 555.00,393.50 555.00,393.50Z" fill="#1a0a05"/>
<circle cx="464.4" cy="483.8" r="5" fill="#f7a88e" opacity="0.7"/><circle cx="567.4" cy="487" r="5" fill="#f7a88e" opacity="0.7"/>
<path d="M464.00,484.00 C464.00,484.00 478.16,486.33 486.00,486.60 C494.94,486.91 505.91,484.82 514.80,485.20 C522.53,485.53 528.53,487.71 536.40,488.10 C545.78,488.56 567.40,487.00 567.40,487.00 C567.40,487.00 563.31,488.94 561.50,491.00 C558.83,494.03 558.11,500.49 554.50,504.80 C549.92,510.27 541.57,516.29 534.60,519.80 C528.24,523.01 521.33,525.70 514.70,525.70 C508.07,525.70 500.58,523.25 494.80,519.80 C488.97,516.31 484.04,510.14 479.90,504.80 C476.04,499.82 473.70,492.61 470.50,489.00 C468.36,486.59 464.00,484.00 464.00,484.00Z" fill="#f2867a"/>
<path d="M464.00,484.00 C464.00,484.00 478.16,486.33 486.00,486.60 C494.94,486.91 505.91,484.82 514.80,485.20 C522.53,485.53 528.53,487.71 536.40,488.10 C545.78,488.56 567.40,487.00 567.40,487.00 C567.40,487.00 563.70,488.83 561.50,490.50 C558.07,493.11 553.81,498.24 549.50,502.00 C544.89,506.02 540.30,511.41 534.60,513.80 C528.74,516.26 521.07,517.01 514.70,516.30 C508.49,515.60 502.02,512.44 496.80,509.80 C492.28,507.52 488.83,505.11 484.90,501.90 C480.38,498.20 475.50,491.62 471.50,488.50 C468.78,486.38 464.00,484.00 464.00,484.00Z" fill="#bb3b2e"/>
<path d="M487.00,496.00 C487.00,496.00 498.79,500.39 505.00,501.00 C511.44,501.63 518.06,500.74 525.00,499.50 C532.82,498.10 549.50,492.50 549.50,492.50 C549.50,492.50 547.84,498.40 546.00,501.00 C543.89,503.97 540.42,506.85 537.00,509.00 C533.45,511.23 528.77,512.85 525.00,514.00 C521.84,514.97 516.00,515.80 516.00,515.80 C516.00,515.80 508.59,512.23 505.00,510.00 C501.25,507.66 497.21,504.54 494.00,502.00 C491.36,499.91 487.00,496.00 487.00,496.00Z" fill="#7c1c17"/>
<path d="M484.90,491.60 C484.90,491.60 495.00,492.50 500.00,492.80 C504.93,493.10 509.60,493.33 514.70,493.40 C520.23,493.48 526.22,493.40 532.00,493.20 C537.82,493.00 549.50,492.20 549.50,492.20 C549.50,492.20 543.59,494.87 540.00,496.00 C535.55,497.40 530.17,498.77 524.70,499.60 C518.54,500.54 510.91,501.50 504.80,501.00 C499.47,500.57 493.44,499.59 490.00,497.50 C487.54,496.01 484.90,491.60 484.90,491.60Z" fill="#ece6ea"/>
<path d="M464.00,483.00 C464.00,483.00 473.49,485.41 478.00,486.00 C482.13,486.54 485.92,486.67 490.00,486.60 C494.25,486.53 498.75,485.77 503.00,485.50 C507.08,485.24 510.79,484.81 515.00,485.00 C519.73,485.22 524.63,486.55 530.00,487.00 C536.18,487.52 543.57,487.81 550.00,487.70 C556.00,487.60 567.40,486.50 567.40,486.50 C567.40,486.50 561.08,489.00 558.00,490.00 C555.09,490.95 552.87,491.73 549.40,492.40 C544.26,493.39 536.08,494.15 530.00,494.50 C524.63,494.81 520.20,494.80 514.80,494.60 C508.63,494.37 501.25,493.79 495.00,493.00 C489.31,492.28 483.97,491.87 478.80,490.20 C473.63,488.53 464.00,483.00 464.00,483.00Z" fill="#e55b40"/>
<circle cx="464.4" cy="483.8" r="2.2" fill="#c8402c"/><circle cx="567.4" cy="487" r="2.2" fill="#c8402c"/>
<circle cx="498.3" cy="485.2" r="18" fill="#ffd84a" opacity="0.72"/>
<path d="M493.9,480.2 L493.9,491.5 L496.4,489.2 L498.2,493.2 L499.8,492.5 L498.1,488.6 L501.6,488.4 Z" fill="#fff" stroke="#222" stroke-width="0.7"/></g></svg><div style="position:absolute;left:33.5px;top:113px;font:normal 11px/12px 'Liberation Mono', monospace;color:#1a1a1a;white-space:pre;">FPS: 20.00, AVG: 33.60</div><div style="position:absolute;left:1003px;top:104px;width:269px;height:479px;background:#f4f4f4"></div><div style="position:absolute;left:1003px;top:104px;width:269px;height:16.8px;background:#c4c4c4"></div><div style="position:absolute;left:1096.5px;top:108px;font:bold 8.3px/10px 'Liberation Sans', sans-serif;color:#404040;white-space:pre;letter-spacing:-0.25px">Content Manager</div><svg style="position:absolute;left:1250px;top:106px" width="14" height="14"><circle cx="6.8" cy="6.3" r="4.6" fill="none" stroke="#444" stroke-width="0.9"/><path d="M4.6,4.1 l4.4,4.4 M9,4.1 l-4.4,4.4" stroke="#444" stroke-width="0.9"/></svg><div style="position:absolute;left:1003px;top:120.8px;width:3px;height:462.2px;background:#c8c8c8"></div><div style="position:absolute;left:1006px;top:121px;width:17.5px;height:62px;background:#d8d8d8;border-bottom:1px solid #ececec;box-sizing:border-box"></div><div style="position:absolute;left:974.8px;top:147.0px;width:80px;height:10px;text-align:center;font:normal 8.6px/10px 'Liberation Sans', sans-serif;color:#7a7a7a;transform:rotate(-90deg);white-space:pre">Project</div><div style="position:absolute;left:1006px;top:183px;width:17.5px;height:63px;background:#f4f4f4;border-bottom:1px solid #ececec;box-sizing:border-box"></div><div style="position:absolute;left:974.8px;top:209.5px;width:80px;height:10px;text-align:center;font:bold 8.6px/10px 'Liberation Sans', sans-serif;color:#222;transform:rotate(-90deg);white-space:pre">Actor</div><div style="position:absolute;left:1006px;top:246px;width:17.5px;height:62.30000000000001px;background:#d8d8d8;border-bottom:1px solid #ececec;box-sizing:border-box"></div><div style="position:absolute;left:974.8px;top:272.15px;width:80px;height:10px;text-align:center;font:normal 8.6px/10px 'Liberation Sans', sans-serif;color:#7a7a7a;transform:rotate(-90deg);white-space:pre">Animation</div><div style="position:absolute;left:1006px;top:308.3px;width:17.5px;height:63.099999999999966px;background:#d8d8d8;border-bottom:1px solid #ececec;box-sizing:border-box"></div><div style="position:absolute;left:974.8px;top:334.85px;width:80px;height:10px;text-align:center;font:normal 8.6px/10px 'Liberation Sans', sans-serif;color:#7a7a7a;transform:rotate(-90deg);white-space:pre">Scene</div><div style="position:absolute;left:1006px;top:371.4px;width:17.5px;height:63.10000000000002px;background:#d8d8d8;border-bottom:1px solid #ececec;box-sizing:border-box"></div><div style="position:absolute;left:974.8px;top:397.95px;width:80px;height:10px;text-align:center;font:normal 8.6px/10px 'Liberation Sans', sans-serif;color:#7a7a7a;transform:rotate(-90deg);white-space:pre">SFX</div><div style="position:absolute;left:1006px;top:434.5px;width:17.5px;height:63.0px;background:#d8d8d8;border-bottom:1px solid #ececec;box-sizing:border-box"></div><div style="position:absolute;left:974.8px;top:461.0px;width:80px;height:10px;text-align:center;font:normal 8.6px/10px 'Liberation Sans', sans-serif;color:#7a7a7a;transform:rotate(-90deg);white-space:pre">Prop</div><div style="position:absolute;left:1006px;top:497.5px;width:17.5px;height:63.0px;background:#d8d8d8;border-bottom:1px solid #ececec;box-sizing:border-box"></div><div style="position:absolute;left:974.8px;top:524.0px;width:80px;height:10px;text-align:center;font:normal 8.6px/10px 'Liberation Sans', sans-serif;color:#7a7a7a;transform:rotate(-90deg);white-space:pre">Elastic Motion</div><div style="position:absolute;left:1039px;top:148.4px;width:1px;height:434.6px;background:#bdbdbd"></div><div style="position:absolute;left:1039px;top:148.4px;width:223.5px;height:1px;background:#bdbdbd"></div><div style="position:absolute;left:1261.5px;top:148.4px;width:1px;height:434.6px;background:#bdbdbd"></div><div style="position:absolute;left:1138.5px;top:131.4px;width:75.5px;height:17.2px;border:1px solid #b8b8b8;border-bottom:none;box-sizing:border-box;background:#f4f4f4"></div><div style="position:absolute;left:1155px;top:134.5px;font:bold 7.85px/10px 'Liberation Sans', sans-serif;color:#333;white-space:pre;">Custom</div><div style="position:absolute;left:1035.5px;top:123.2px;width:103px;height:33.8px;background:#e8151b"></div><div style="position:absolute;left:1042px;top:128.7px;width:91px;height:22.6px;background:#f6f6f6"></div><div style="position:absolute;left:1042px;top:131.4px;width:84.8px;height:16.6px;background:#f2490c"></div><div style="position:absolute;left:1065.2px;top:134.5px;font:bold 7.9px/10px 'Liberation Sans', sans-serif;color:#fff;white-space:pre;">Template</div><svg style="position:absolute;left:1245px;top:132px" width="16" height="16"><circle cx="7.6" cy="7.6" r="5.4" fill="none" stroke="#444" stroke-width="0.9"/><path d="M5,6.6 l2.6,2.6 l2.6,-2.6" fill="none" stroke="#444" stroke-width="0.9"/></svg><svg style="position:absolute;left:1052px;top:160px" width="14" height="12"><path d="M3,3.5 h6 a3,3 0 0 1 0,6 h-7" fill="none" stroke="#d0d0d0" stroke-width="1"/><path d="M1.5,3.5 l2.5,-2 v4z" fill="#d0d0d0"/></svg><div style="position:absolute;left:1077.8px;top:158.4px;width:175px;height:16.4px;border:1px solid #c4c4c4;box-sizing:border-box;background:#f6f6f6"></div><div style="position:absolute;left:1082px;top:162px;font:normal 8px/10px 'Liberation Sans', sans-serif;color:#333;white-space:pre;">Actor Template</div><svg style="position:absolute;left:1136px;top:163px" width="5" height="7"><path d="M1,0.5 l3,2.8 l-3,2.8z" fill="#222"/></svg><div style="position:absolute;left:1049px;top:185px;width:101px;height:398px;border:1px solid #a8a8a8;border-bottom:none;box-sizing:border-box"></div><div style="position:absolute;left:1050px;top:186px;width:99px;height:15.5px;background:#c2c2c2"></div><svg style="position:absolute;left:1051px;top:190px" width="8" height="6"><path d="M1,1 h5 l-2.5,3z" fill="#8a8a8a"/></svg><div style="position:absolute;left:1061.9px;top:189px;font:normal 8px/10px 'Liberation Sans', sans-serif;color:#333;white-space:pre;">Actor Template</div><svg style="position:absolute;left:1062px;top:206.5px" width="6" height="7"><path d="M1,0.5 l3,3 l-3,3z" fill="#8a8a8a"/></svg><div style="position:absolute;left:1071.9px;top:205px;font:normal 8px/10px 'Liberation Sans', sans-serif;color:#333;white-space:pre;">Character</div><svg style="position:absolute;left:1062px;top:222.5px" width="6" height="7"><path d="M1,0.5 l3,3 l-3,3z" fill="#8a8a8a"/></svg><div style="position:absolute;left:1071.9px;top:221px;font:normal 8px/10px 'Liberation Sans', sans-serif;color:#333;white-space:pre;">Head</div><svg style="position:absolute;left:1062px;top:238.5px" width="6" height="7"><path d="M1,0.5 l3,3 l-3,3z" fill="#8a8a8a"/></svg><div style="position:absolute;left:1071.9px;top:237px;font:normal 8px/10px 'Liberation Sans', sans-serif;color:#333;white-space:pre;">Body</div><svg style="position:absolute;left:1062px;top:254.5px" width="6" height="7"><path d="M1,0.5 l3,3 l-3,3z" fill="#8a8a8a"/></svg><div style="position:absolute;left:1071.9px;top:253px;font:normal 8px/10px 'Liberation Sans', sans-serif;color:#333;white-space:pre;">Accessory</div><div style="position:absolute;left:1149.7px;top:395px;width:2px;height:35px;background:repeating-linear-gradient(#aaa 0 1px,#eee 1px 2px)"></div><div style="position:absolute;left:1152.2px;top:185px;width:100.3px;height:398px;border:1px solid #bdbdbd;border-bottom:none;box-sizing:border-box"></div><svg style="position:absolute;left:1172px;top:194.5px" width="40" height="32" viewBox="0 0 40 32" fill="none" stroke="#8c8c8c" stroke-width="0.9"><path d="M3.5,4.5 q0,-2 2,-2 h29 q2,0 2,2 v2 M2,8 q0,-1.5 1.5,-1.5 h6.5 l2,2.5 h12 l2,-2.5 h9.5 q1.5,0 1.5,1.5 v19 q0,2 -2,2 h-31 q-2,0 -2,-2 z"/><path d="M18.5,10.5 h3 l-0.5,2 l1.3,8 l-2.3,3 l-2.3,-3 l1.3,-8 z"/></svg><div style="position:absolute;left:1142px;top:235px;width:100px;text-align:center;font:8px/10px 'Liberation Sans', sans-serif;color:#333">Accessory</div><svg style="position:absolute;left:1172px;top:261px" width="40" height="32" viewBox="0 0 40 32" fill="none" stroke="#8c8c8c" stroke-width="0.9"><path d="M3.5,4.5 q0,-2 2,-2 h29 q2,0 2,2 v2 M2,8 q0,-1.5 1.5,-1.5 h6.5 l2,2.5 h12 l2,-2.5 h9.5 q1.5,0 1.5,1.5 v19 q0,2 -2,2 h-31 q-2,0 -2,-2 z"/><circle cx="20" cy="9.5" r="1.6"/><path d="M7,16 l10,-4.5 h6 l10,4.5 M18,11.5 v16.5 M22,11.5 v16.5 M20,20 v8"/></svg><div style="position:absolute;left:1142px;top:302px;width:100px;text-align:center;font:8px/10px 'Liberation Sans', sans-serif;color:#333">Body</div><svg style="position:absolute;left:1172px;top:328px" width="40" height="32" viewBox="0 0 40 32" fill="none" stroke="#8c8c8c" stroke-width="0.9"><path d="M3.5,4.5 q0,-2 2,-2 h29 q2,0 2,2 v2 M2,8 q0,-1.5 1.5,-1.5 h6.5 l2,2.5 h12 l2,-2.5 h9.5 q1.5,0 1.5,1.5 v19 q0,2 -2,2 h-31 q-2,0 -2,-2 z"/><circle cx="20" cy="12.5" r="3.3"/><path d="M8,21.5 l8.5,-4.5 h7 l8.5,4.5 M17,17 v11 M23,17 v11"/></svg><div style="position:absolute;left:1142px;top:368.3px;width:100px;text-align:center;font:8px/10px 'Liberation Sans', sans-serif;color:#333">Character</div><svg style="position:absolute;left:1172px;top:394.6px" width="40" height="32" viewBox="0 0 40 32" fill="none" stroke="#8c8c8c" stroke-width="0.9"><path d="M3.5,4.5 q0,-2 2,-2 h29 q2,0 2,2 v2 M2,8 q0,-1.5 1.5,-1.5 h6.5 l2,2.5 h12 l2,-2.5 h9.5 q1.5,0 1.5,1.5 v19 q0,2 -2,2 h-31 q-2,0 -2,-2 z"/><path d="M16.5,24.5 q-2.5,-2.5 -2.5,-8 q0,-6 6,-6 q6,0 6,6 q0,5.5 -2.5,8 v1.5 q3,1 5,2 M16.5,24.5 v1.5 q-3,1 -5,2"/></svg><div style="position:absolute;left:1142px;top:435px;width:100px;text-align:center;font:8px/10px 'Liberation Sans', sans-serif;color:#333">Head</div>
</body></html>
